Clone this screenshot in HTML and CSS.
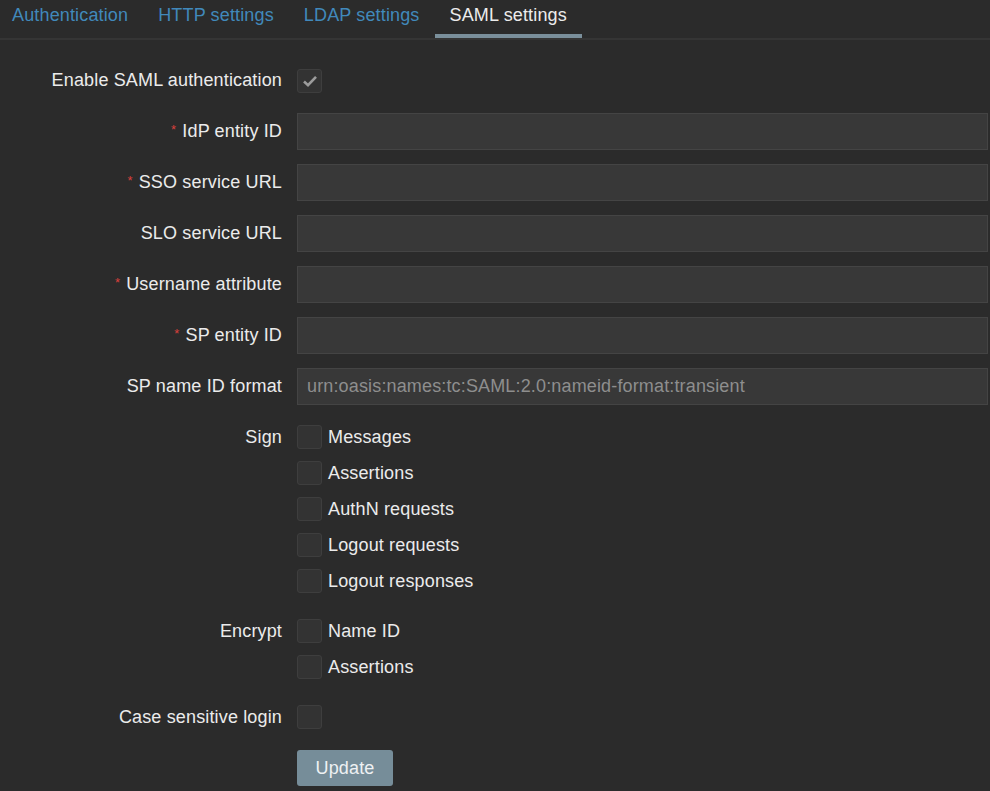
FILE: index.html
```html
<!DOCTYPE html>
<html>
<head>
<meta charset="utf-8">
<link rel="stylesheet" href="styles.css">
</head>
<body>
<div class="tabs">
  <a class="tab">Authentication</a>
  <a class="tab">HTTP settings</a>
  <a class="tab">LDAP settings</a>
  <a class="tab active">SAML settings</a>
</div>
<form class="form">
  <div class="row">
    <label class="label">Enable SAML authentication</label>
    <div class="field">
      <div class="cb-item"><span class="cb checked"><svg width="18" height="18" viewBox="0 0 18 18"><path d="M3 9.5 L7 13.2 L15 4.8" fill="none" stroke="#9c9c9c" stroke-width="2.6"/></svg></span></div>
    </div>
  </div>
  <div class="row">
    <label class="label"><span class="req">*</span>IdP entity ID</label>
    <div class="field"><input class="input" type="text"></div>
  </div>
  <div class="row">
    <label class="label"><span class="req">*</span>SSO service URL</label>
    <div class="field"><input class="input" type="text"></div>
  </div>
  <div class="row">
    <label class="label">SLO service URL</label>
    <div class="field"><input class="input" type="text"></div>
  </div>
  <div class="row">
    <label class="label"><span class="req">*</span>Username attribute</label>
    <div class="field"><input class="input" type="text"></div>
  </div>
  <div class="row">
    <label class="label"><span class="req">*</span>SP entity ID</label>
    <div class="field"><input class="input" type="text"></div>
  </div>
  <div class="row">
    <label class="label">SP name ID format</label>
    <div class="field"><input class="input" type="text" placeholder="urn:oasis:names:tc:SAML:2.0:nameid-format:transient"></div>
  </div>
  <div class="row">
    <label class="label cb-label">Sign</label>
    <div class="field list">
      <div class="cb-item"><span class="cb"></span><span class="cb-text">Messages</span></div>
      <div class="cb-item"><span class="cb"></span><span class="cb-text">Assertions</span></div>
      <div class="cb-item"><span class="cb"></span><span class="cb-text">AuthN requests</span></div>
      <div class="cb-item"><span class="cb"></span><span class="cb-text">Logout requests</span></div>
      <div class="cb-item"><span class="cb"></span><span class="cb-text">Logout responses</span></div>
    </div>
  </div>
  <div class="row">
    <label class="label cb-label">Encrypt</label>
    <div class="field list">
      <div class="cb-item"><span class="cb"></span><span class="cb-text">Name ID</span></div>
      <div class="cb-item"><span class="cb"></span><span class="cb-text">Assertions</span></div>
    </div>
  </div>
  <div class="row">
    <label class="label cb-label">Case sensitive login</label>
    <div class="field list">
      <div class="cb-item"><span class="cb"></span></div>
    </div>
  </div>
  <div class="row">
    <div class="label"></div>
    <div class="field"><button class="btn" type="button">Update</button></div>
  </div>
</form>
</body>
</html>
```

FILE: styles.css
```css
html, body {
  margin: 0;
  padding: 0;
  background: #2b2b2b;
  height: 100%;
}
body {
  font-family: "Liberation Sans", Arial, sans-serif;
  font-size: 18px;
  letter-spacing: 0.15px;
  color: #ebebeb;
  overflow: hidden;
}
.tabs {
  display: flex;
  margin-left: -3px;
  border-bottom: 2px solid #353535;
}
.tab {
  display: block;
  padding: 0 15px 4px;
  line-height: 30px;
  border-bottom: 4px solid transparent;
  color: #4189bb;
}
.tab.active {
  color: #ececec;
  border-bottom-color: #7a8f9b;
}
.form {
  display: flex;
  flex-direction: column;
  gap: 14px;
  padding-top: 22px;
}
.row {
  display: grid;
  grid-template-columns: 282px 1fr;
  column-gap: 15px;
  min-height: 37px;
  align-items: start;
}
.label {
  text-align: right;
  line-height: 37px;
  height: 37px;
  white-space: nowrap;
}
.label.cb-label {
  line-height: 36px;
  height: 36px;
}
.req {
  color: #d9403c;
  margin-right: 6px;
  font-size: 13px;
  line-height: 1;
  position: relative;
  top: -3px;
}
.field {
  padding-right: 2px;
}
.input {
  display: block;
  box-sizing: border-box;
  width: 100%;
  height: 37px;
  margin: 0;
  padding: 0 9px;
  background: #383838;
  border: 1px solid #444444;
  border-radius: 0;
  font-family: "Liberation Sans", Arial, sans-serif;
  font-size: 18px;
  letter-spacing: 0.15px;
  color: #ebebeb;
  outline: none;
}
.input::placeholder {
  color: #8e8e8e;
}
.list {
  display: flex;
  flex-direction: column;
}
.cb-item {
  display: flex;
  align-items: center;
  height: 37px;
}
.list .cb-item {
  height: 36px;
}
.cb {
  box-sizing: border-box;
  width: 25px;
  height: 24px;
  background: #333333;
  border: 1px solid #3e3e3e;
  border-radius: 3px;
  display: flex;
  align-items: center;
  justify-content: center;
  flex: none;
}
.cb-text {
  margin-left: 6px;
}
.btn {
  width: 96px;
  height: 36px;
  background: #768d99;
  border: none;
  border-radius: 3px;
  color: #eef1f3;
  font-family: "Liberation Sans", Arial, sans-serif;
  font-size: 18px;
  letter-spacing: 0.15px;
  padding: 0;
}
```
